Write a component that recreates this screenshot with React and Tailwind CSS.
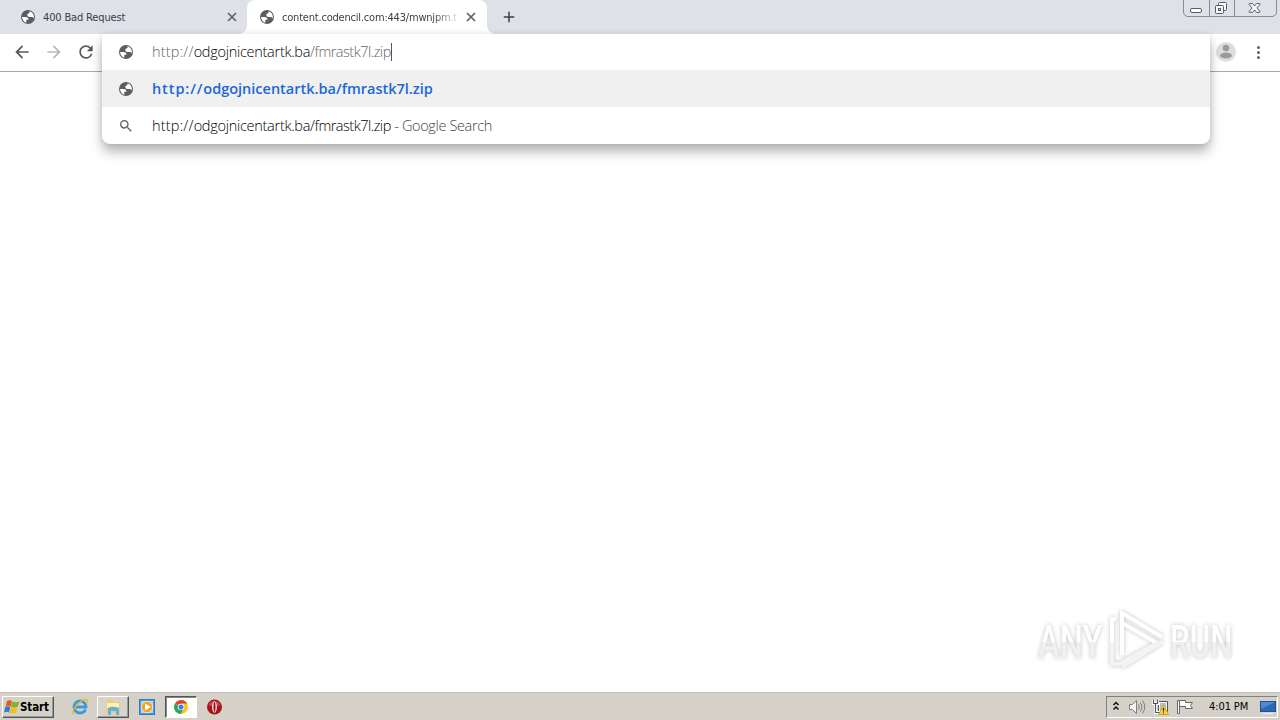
import { MdArrowBack, MdArrowForward, MdRefresh, MdSearch, MdAdd } from "react-icons/md"

function Globe({ className }) {
  return (
    <svg viewBox="0 0 16 16" className={className}>
      <circle cx="8" cy="8" r="7" fill="#5a5d61" />
      <path
        d="M2.100 8h3.300c2.100 0 3.100 1 3.100 2.800H6.300v2.900C3.800 13 2.100 10.700 2.100 8z"
        fill="#fff"
      />
      <path
        d="M9.500 2.300c2.600.600 4.400 3 4.400 5.700 0 .5 0 .9-.2 1.300-.6-.9-1.300-1.300-2.200-1.300H9.700c-1.600 0-2.400-.8-2.400-2.200 0-1 .6-1.500 1.700-1.600.6-.1.600-1 .5-1.900z"
        fill="#fff"
      />
    </svg>
  )
}

function CloseIcon() {
  return (
    <svg viewBox="0 0 14 14" className="h-[14px] w-[14px]" fill="none" stroke="#5f6368" strokeWidth="1.700">
      <path d="M3 3l8 8M11 3l-8 8" />
    </svg>
  )
}

function WindowControls() {
  return (
    <div className="absolute top-[-4px] right-[3px] flex h-[21px] w-[94px] rounded-b-[5px] border border-[#858b99] text-[#555b66]">
      <div className="w-[26px] border-r border-[#858b99]">
        <svg viewBox="0 0 26 20" className="h-5 w-[26px]">
          <rect x="6.500" y="11.500" width="11" height="4" rx="1.500" fill="#fff" stroke="currentColor" />
        </svg>
      </div>
      <div className="w-[25px] border-r border-[#858b99]">
        <svg viewBox="0 0 25 20" className="h-5 w-[25px]" fill="#f7f8fa" stroke="currentColor">
          <rect x="8.500" y="5.500" width="8" height="8" rx="1" />
          <rect x="5.500" y="8.500" width="8" height="8" rx="1" />
          <rect x="8.500" y="11.500" width="2" height="2" />
        </svg>
      </div>
      <svg viewBox="0 0 42 20" className="h-5 w-[42px]" fill="#f7f8fa" stroke="currentColor">
        <path d="M14.500 6.500h3.500l2 2.500 2-2.500h3.500v1L22.500 11l3 3.500v1H22l-2-2.500-2 2.500h-3.500v-1l3-3.500-3-3.500z" />
      </svg>
    </div>
  )
}

function TabStrip() {
  return (
    <header className="relative flex h-[34px] bg-[#dee1e8] font-['DejaVu_Sans_Condensed','DejaVu_Sans',sans-serif] text-[11px] text-[#3c4043]">
      <div className="flex w-[247px] items-center pl-5">
        <Globe className="h-4 w-4 shrink-0" />
        <span className="ml-[7px] w-[182px] pt-[2px] whitespace-nowrap tracking-[-0.15px]">400 Bad Request</span>
        <CloseIcon />
      </div>
      <div className="relative flex w-60 items-center rounded-t-lg bg-white pl-3">
        <span className="absolute bottom-0 left-[-8px] h-2 w-2 bg-[radial-gradient(circle_at_0_0,#dee1e8_7.5px,#fff_8px)]" />
        <span className="absolute right-[-8px] bottom-0 h-2 w-2 bg-[radial-gradient(circle_at_100%_0,#dee1e8_7.5px,#fff_8px)]" />
        <Globe className="h-4 w-4 shrink-0" />
        <span className="ml-[7px] w-[182px] pt-[2px] tracking-[-0.2px] whitespace-nowrap [mask-image:linear-gradient(to_right,#000_150px,transparent_180px)]">
          content.codencil.com:443/mwnjpm.t
        </span>
        <CloseIcon />
      </div>
      <MdAdd className="mt-2 ml-[13px] h-[18px] w-[18px] text-[#3c4043]" />
      <WindowControls />
    </header>
  )
}

function Omnibox() {
  return (
    <div className="absolute top-0 left-[102px] w-[1108px] rounded-b-lg bg-white font-['Open_Sans',sans-serif] text-[14.5px] font-light text-black shadow-[0_8px_12px_rgba(0,0,0,0.28),0_0_6px_rgba(0,0,0,0.1)]">
      <div className="flex h-9 items-center pl-4">
        <Globe className="h-4 w-4" />
        <p className="ml-[18px] flex items-center whitespace-nowrap">
          <span className="tracking-[0.2px] text-[#666]">http://</span>
          <span className="tracking-[-0.28px]">odgojnicentartk.ba</span>
          <span className="tracking-[-0.5px] text-[#666]">/fmrastk7l.zip</span>
          <span className="h-[18px] w-px bg-[#555]" />
        </p>
      </div>
      <div className="flex h-[37px] items-center bg-[#f0f0f0] pl-4">
        <Globe className="h-4 w-4" />
        <p className="ml-[18px] font-semibold whitespace-nowrap text-[#1a68d8]">
          <span className="tracking-[0.9px]">http://</span>odgojnicentartk.ba/fmrastk7l.zip
        </p>
      </div>
      <div className="flex h-[37px] items-center pl-4">
        <MdSearch className="h-4 w-4 text-[#5f6368]" />
        <p className="ml-[18px] whitespace-nowrap">
          <span className="tracking-[0.2px]">http://</span>
          <span className="tracking-[-0.28px]">odgojnicentartk.ba</span>
          <span className="tracking-[-0.5px]">/fmrastk7l.zip</span>
          <span className="tracking-[-0.36px] text-[#444]"> - Google Search</span>
        </p>
      </div>
    </div>
  )
}

function Toolbar() {
  return (
    <nav className="relative z-10 flex h-[38px] items-center border-b border-[#a8a8a8] bg-white pb-px">
      <MdArrowBack className="ml-3 h-5 w-5 text-[#55585c]" />
      <MdArrowForward className="ml-3 h-5 w-5 text-[#b5b7ba]" />
      <MdRefresh className="ml-3 h-5 w-5 text-[#55585c]" />
      <Omnibox />
      <svg viewBox="0 0 20 20" className="ml-auto h-5 w-5">
        <circle cx="10" cy="10" r="10" fill="#dedede" />
        <circle cx="10" cy="6" r="3.300" fill="#9b9b9b" />
        <ellipse cx="10" cy="13.500" rx="6" ry="3" fill="#9b9b9b" />
      </svg>
      <svg viewBox="0 0 20 20" className="mr-3 ml-3 h-5 w-5" fill="#5f6368">
        <circle cx="10.500" cy="5.500" r="1.500" />
        <circle cx="10.500" cy="10.500" r="1.500" />
        <circle cx="10.500" cy="15.500" r="1.500" />
      </svg>
    </nav>
  )
}

function Watermark() {
  return (
    <div className="absolute right-[46px] bottom-[22px] flex h-[60px] w-[196px] items-center justify-between font-['Roboto',sans-serif] text-[46px] leading-none font-medium [filter:drop-shadow(0_0_2px_rgba(0,0,0,0.24))]">
      <span className="w-[66px] pt-[3px]">
        <span className="inline-block origin-left scale-x-[0.71] bg-[linear-gradient(#fff_50%,#f0f0f0_50%)] bg-clip-text text-transparent">ANY</span>
      </span>
      <svg viewBox="0 0 58 60" className="h-[60px] w-[58px] shrink-0" fill="none" stroke="#fff" strokeWidth="4">
        <path d="M14 45V3l40 24" />
        <path d="M14 13l38 22" />
        <path d="M8 9H4v23" />
        <path d="M4 32v22h7l40-22M14 57l40-25" stroke="#f3f3f3" />
      </svg>
      <span className="w-[64px] pt-[3px]">
        <span className="inline-block origin-left scale-x-[0.68] bg-[linear-gradient(#fff_50%,#f0f0f0_50%)] bg-clip-text text-transparent">RUN</span>
      </span>
    </div>
  )
}

function StartFlag() {
  return (
    <svg viewBox="0 0 16 16" className="h-4 w-4 shrink-0">
      <path d="M3 2c2-1 3.500-.8 5 .1L6.700 7.500C5 6.500 3.500 6.500 1.700 7.300z" fill="#e85a20" />
      <path d="M8.300 2.500c1.800 1 4 1 7 0l-1.600 5.300c-2 1-4.400 1-6.700-.1z" fill="#7cb52b" />
      <path d="M1.400 7.700c2-.8 3.600-.7 5 .2L5 13.400c-1.500-1-3-1-5 0z" fill="#3679cd" />
      <path d="M6.800 8.200c2 1 4.500 1 6.700 0L12 13.700c-2 1-4 1-6.600 0z" fill="#f3bd27" />
    </svg>
  )
}

function TrayIcons() {
  return (
    <>
      <svg viewBox="0 0 8 12" className="h-3 w-2" fill="none" stroke="#111" strokeWidth="1.500">
        <path d="M1.500 4L4 1.500 6.500 4M1.500 8.500L4 6l2.500 2.500" />
      </svg>
      <svg viewBox="0 0 18 16" className="ml-[8px] h-4 w-[18px]" fill="none" stroke="#808080">
        <path d="M1.500 5.500h3l4-4v13l-4-4h-3z" fill="#f5f5f5" />
        <path d="M10.500 5.500q1.500 2.500 0 5M12.500 3.500q3 4.500 0 9M14.500 1.500q4.500 6.500 0 13" />
      </svg>
      <svg viewBox="0 0 18 16" className="ml-[6px] h-4 w-[18px]">
        <path d="M6.500 2.500h9v10h-9z" fill="#f5f5f5" stroke="#555" />
        <path d="M8 4h6v7H8z" fill="#b9bcc0" />
        <path d="M1.500.5v4h4v-4M3.500 4.500v9h5" fill="none" stroke="#fff" strokeWidth="3" />
        <path d="M1.500.5v4h4v-4M3.500 4.500v9h5" fill="none" stroke="#555" strokeWidth="1.200" />
        <path d="M11.500 6l5 9.500h-10z" fill="#ffd42e" stroke="#b9951c" strokeWidth=".7" />
        <path d="M11.500 9v3.500m0 1v1" stroke="#222" strokeWidth="1.200" />
      </svg>
      <svg viewBox="0 0 18 16" className="ml-[7px] h-4 w-[18px]" fill="#fafafa" stroke="#666">
        <path d="M2.500 1.500h6v2h7l-2 3 2 3h-7v-2h-6" />
        <path d="M.5 1.500h2v13h-2z" />
      </svg>
    </>
  )
}

function Taskbar() {
  return (
    <footer className="flex h-7 items-center border-t border-[#c4c1bb] bg-[#d5d1c9] pt-px font-['DejaVu_Sans_Condensed','DejaVu_Sans',sans-serif] text-[11px] text-black">
      <button className="ml-[2px] flex h-[22px] w-[52px] items-center border border-t-white border-r-[#555] border-b-[#555] border-l-white pl-px font-bold shadow-[inset_-1px_-1px_#999]">
        <StartFlag />
        <span className="text-[11.5px]/4 tracking-[-0.1px]">Start</span>
      </button>
      <svg viewBox="0 0 18 18" className="ml-[17px] h-[18px] w-[18px]" fill="none">
        <path d="M14.500 11.500C13.500 14 11.500 15 9 15a6 6 0 1 1 6-6H5" stroke="#389bd9" strokeWidth="2.800" />
        <path d="M2.500 16.500C-1 14 8 3 14 1.500c3-.8 3 1.500 2 3.500" stroke="#e9b72b" strokeWidth="1.300" />
      </svg>
      <div className="ml-2 flex h-[22px] w-8 items-center justify-center border border-t-white border-r-[#555] border-b-[#555] border-l-white bg-[#d8d4cc] shadow-[inset_-1px_-1px_#999]">
        <svg viewBox="0 0 18 16" className="h-4 w-[18px]">
          <path d="M2 1h6l1 2h7v11H2z" fill="#eace78" />
          <path d="M3 4h12v5H3z" fill="#fff0ac" />
          <path d="M4 16V9q5-2.500 11 0v7h-3v-4H7v4z" fill="#64b1dc" />
        </svg>
      </div>
      <svg viewBox="0 0 16 16" className="ml-[10px] h-4 w-4">
        <rect x=".5" y=".5" width="15" height="15" fill="#4d9be0" stroke="#3479ba" />
        <rect x="2" y="2" width="12" height="12" fill="#a9d4f5" />
        <circle cx="8" cy="8" r="5.700" fill="#f4a020" stroke="#fff" strokeWidth=".6" />
        <path d="M6 4.500v7l6-3.500z" fill="#fff" />
      </svg>
      <div className="ml-[10px] flex h-[22px] w-8 items-center justify-center border border-t-[#555] border-r-white border-b-white border-l-[#555] bg-white shadow-[inset_1px_1px_#888]">
        <svg viewBox="0 0 16 16" className="h-[14px] w-[14px]">
          <path d="M8 8L1.100 4A8 8 0 0 1 14.900 4z" fill="#df4134" />
          <path d="M8 8V0a8 8 0 0 1 6.900 4A8 8 0 0 1 8 16l3-6z" fill="#fbc51b" />
          <path d="M8 8l3 2-3 6A8 8 0 0 1 1.100 4z" fill="#2da54e" />
          <path d="M8 0a8 8 0 0 1 6.900 4H8z" fill="#df4134" />
          <circle cx="8" cy="8" r="3.800" fill="#fff" />
          <circle cx="8" cy="8" r="2.900" fill="#3b7ded" />
        </svg>
      </div>
      <svg viewBox="0 0 16 16" className="ml-[9px] h-4 w-4">
        <circle cx="8.500" cy="8" r="7.500" fill="#a91219" />
        <path d="M2.500 6a6.500 6.500 0 0 1 12 0q-6 3-12 0z" fill="#cc4246" />
        <ellipse cx="8.500" cy="8" rx="2.400" ry="5.700" fill="#f5eeee" />
        <ellipse cx="8.500" cy="8" rx="1" ry="4.900" fill="#8d1519" />
      </svg>
      <div className="mr-[2px] ml-auto flex h-[22px] w-[172px] items-center border border-t-[#808080] border-r-white border-b-white border-l-[#808080] pl-[5px]">
        <TrayIcons />
        <span className="ml-[14px] w-[51px] pt-px tracking-[-0.1px] whitespace-nowrap">4:01 PM</span>
        <svg viewBox="0 0 16 14" className="h-[14px] w-4">
          <rect x=".5" y="1.500" width="15" height="10" fill="#2c68b6" stroke="#254f87" />
          <path d="M1 2h14L1 9z" fill="#4a8bd6" />
          <path d="M3 13.500h10" stroke="#e8eef7" />
        </svg>
      </div>
    </footer>
  )
}

export default function App() {
  return (
    <div className="flex h-screen flex-col overflow-hidden bg-white">
      <TabStrip />
      <Toolbar />
      <main className="relative flex-1 bg-white">
        <Watermark />
      </main>
      <Taskbar />
    </div>
  )
}
